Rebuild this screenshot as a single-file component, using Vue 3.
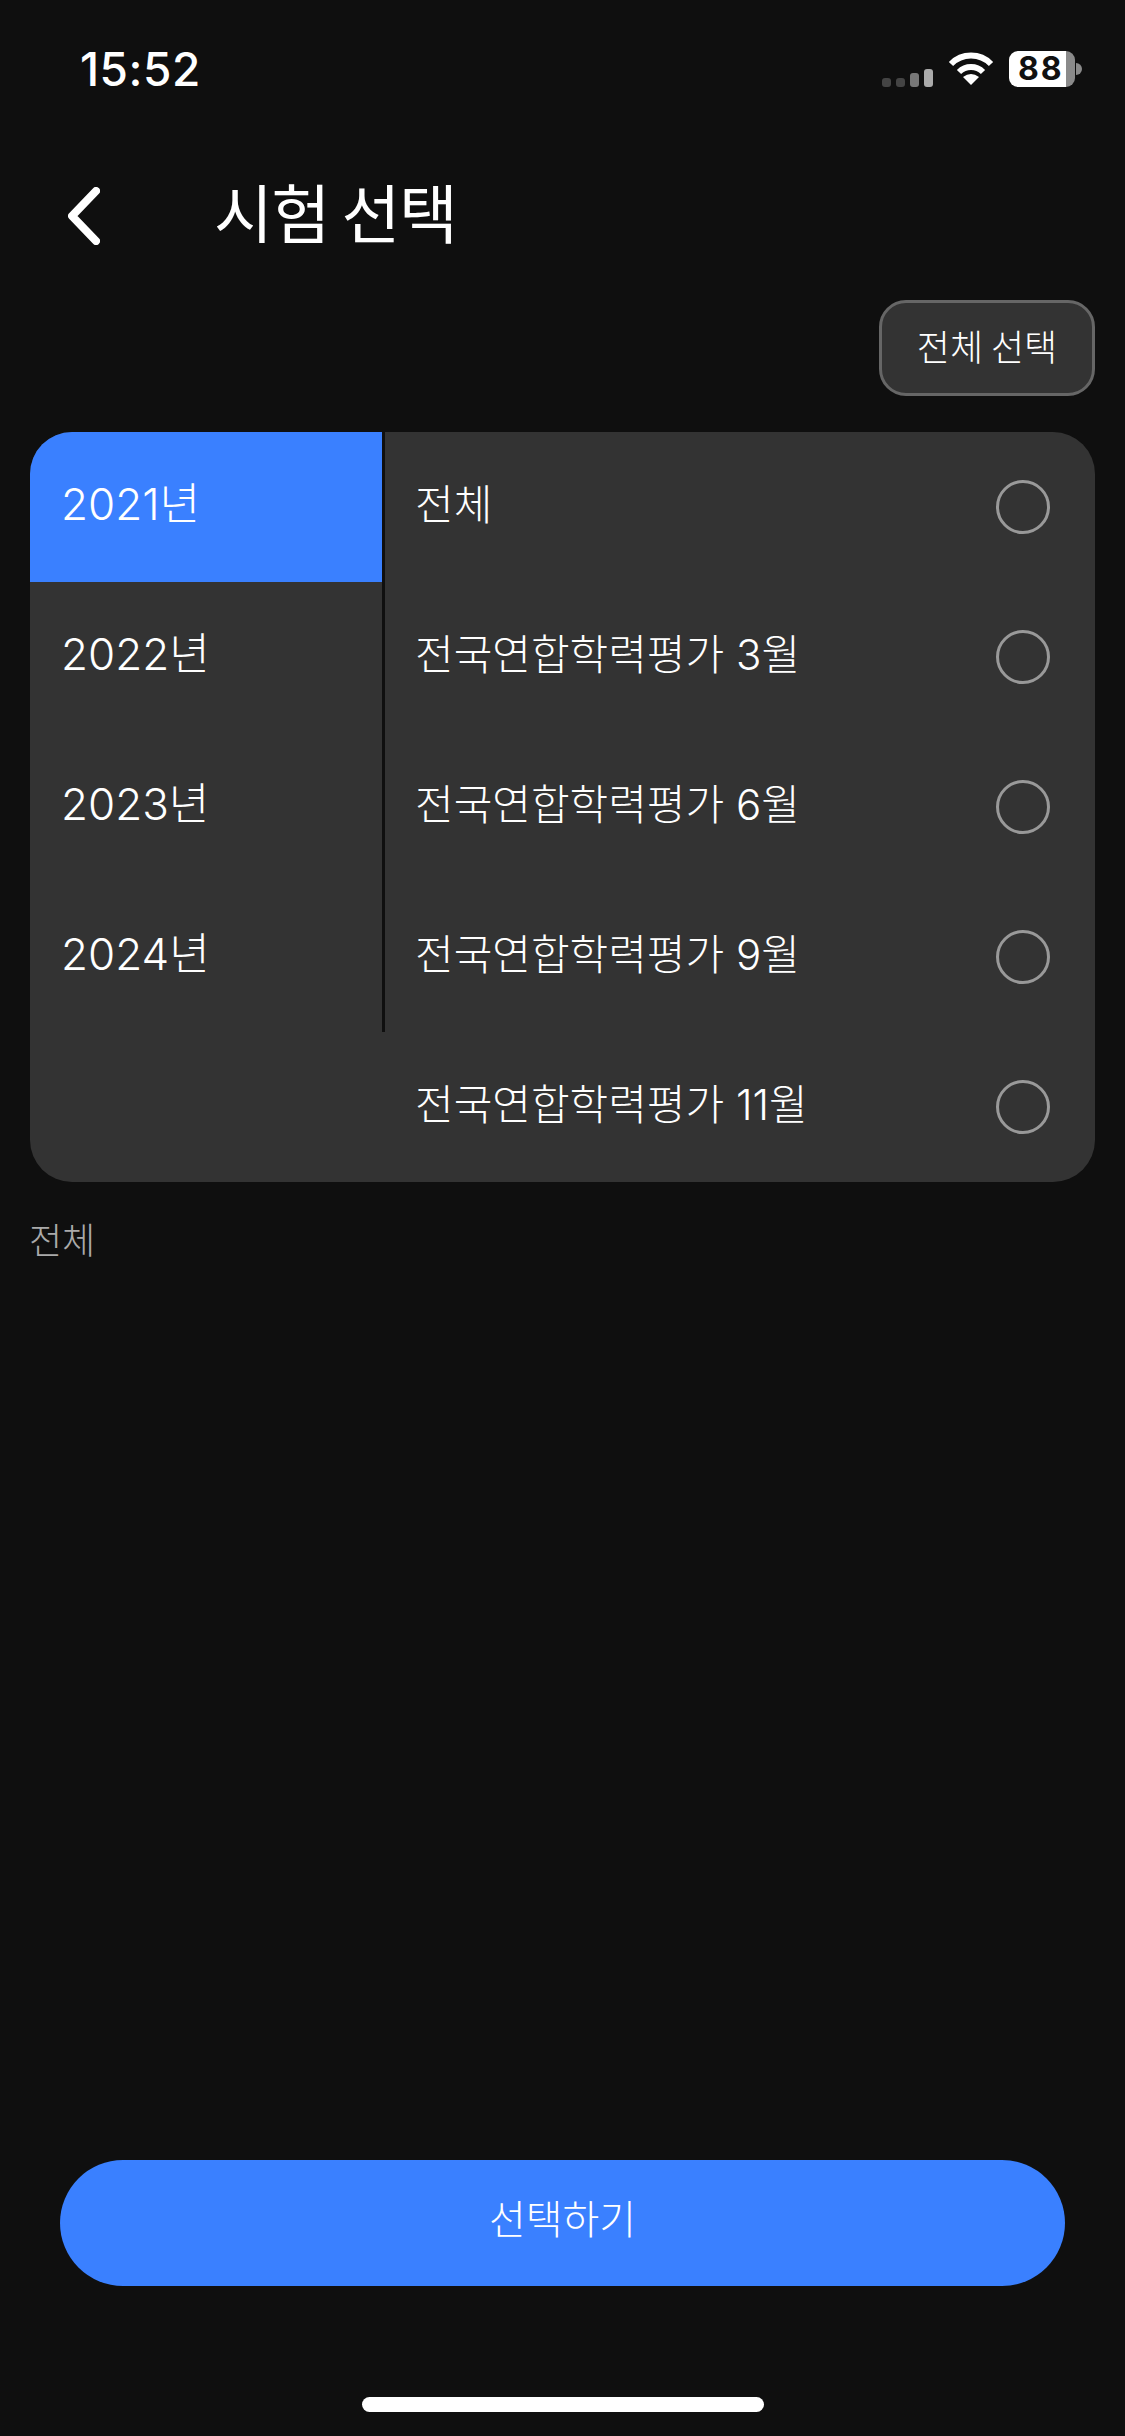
<script setup>
const years = [
  { label: '2021년', active: true },
  { label: '2022년', active: false },
  { label: '2023년', active: false },
  { label: '2024년', active: false },
]
const exams = ['전체', '전국연합학력평가 3월', '전국연합학력평가 6월', '전국연합학력평가 9월', '전국연합학력평가 11월']
</script>

<template>
  <div class="page">
    <div class="status">
      <span class="time">15:52</span>
      <div class="status-right">
        <div class="signal">
          <i class="b1"></i><i class="b2"></i><i class="b3"></i><i class="b4"></i>
        </div>
        <svg class="wifi" width="46" height="33" viewBox="0 0 46 33">
          <path d="M3 12A28 28 0 0 1 43 12" fill="none" stroke="#fff" stroke-width="6" />
          <path d="M11 20A17 17 0 0 1 35 20" fill="none" stroke="#fff" stroke-width="6" />
          <path d="M23 33L15 25Q23 19 31 25Z" fill="#fff" />
        </svg>
        <div class="battery"><span>88</span></div>
        <div class="nub"></div>
      </div>
    </div>

    <header class="header">
      <svg class="back" width="32" height="58" viewBox="0 0 32 58">
        <path d="M28 4L4 29L28 54" fill="none" stroke="#fff" stroke-width="8" stroke-linecap="round" stroke-linejoin="round" />
      </svg>
      <h1 class="title">시험 선택</h1>
    </header>

    <div class="actions">
      <button class="select-all">전체 선택</button>
    </div>

    <section class="card">
      <div class="years">
        <div v-for="y in years" :key="y.label" class="year" :class="{ active: y.active }">
          <span>{{ y.label }}</span>
        </div>
      </div>
      <div class="exams">
        <div v-for="e in exams" :key="e" class="exam">
          <span>{{ e }}</span>
          <span class="radio"></span>
        </div>
      </div>
    </section>

    <p class="selected">전체</p>

    <div class="spacer"></div>

    <button class="confirm">선택하기</button>
    <div class="home"></div>
  </div>
</template>

<style scoped>
.page {
  height: 2436px;
  width: 1125px;
  display: flex;
  flex-direction: column;
  background: #0f0f0f;
  color: #fff;
  font-family: Inter, "Noto Sans CJK KR", sans-serif;
  font-weight: 300;
  overflow: hidden;
}
.status {
  height: 120px;
  flex: none;
  display: flex;
  justify-content: space-between;
  align-items: flex-start;
  padding: 0 43px 0 80px;
  box-sizing: border-box;
}
.time {
  font-family: Inter, sans-serif;
  font-weight: 500;
  font-size: 46px;
  line-height: 54px;
  letter-spacing: 0.5px;
  margin-top: 42px;
}
.status-right {
  display: flex;
  align-items: flex-end;
  margin-top: 51px;
  height: 36px;
}
.signal {
  display: flex;
  align-items: flex-end;
  gap: 5px;
  height: 34px;
  margin-right: 15px;
}
.signal i {
  width: 9px;
  border-radius: 3px;
  display: block;
}
.b1, .b2 { height: 9px; background: #444; }
.b3 { height: 14px; background: #777; }
.b4 { height: 18px; background: #aaa; }
.wifi {
  margin-right: 15px;
  margin-bottom: 2px;
}
.battery {
  width: 66px;
  height: 36px;
  box-sizing: border-box;
  border-radius: 9px;
  background: linear-gradient(90deg, #fff 57px, #8a8a8a 57px);
  color: #111;
  font-family: Inter, sans-serif;
  font-weight: 700;
  font-size: 32px;
  line-height: 36px;
  letter-spacing: 2px;
  padding-left: 9px;
}
.nub {
  width: 6px;
  height: 12px;
  margin: 0 0 12px 1px;
  background: #8a8a8a;
  border-radius: 0 6px 6px 0;
}
.header {
  height: 180px;
  flex: none;
  display: flex;
  align-items: center;
  padding: 12px 0 0 68px;
  box-sizing: border-box;
}
.title {
  margin: 0 0 0 114px;
  font-family: "Noto Sans CJK KR", sans-serif;
  font-weight: 400;
  font-size: 64px;
  line-height: 80px;
  letter-spacing: -1.5px;
  position: relative;
  top: -6px;
}
.actions {
  flex: none;
  display: flex;
  justify-content: flex-end;
  padding-right: 30px;
  margin-bottom: 36px;
}
.select-all {
  width: 216px;
  height: 96px;
  box-sizing: border-box;
  background: #333;
  border: 3px solid #666;
  border-radius: 27px;
  color: #fff;
  font-family: "Noto Sans CJK KR", sans-serif;
  font-weight: 300;
  font-size: 36px;
  padding: 0 0 6px;
}
.card {
  flex: none;
  height: 750px;
  margin: 0 30px;
  background: #333;
  border-radius: 42px;
  overflow: hidden;
  display: flex;
  align-items: flex-start;
}
.years {
  width: 355px;
  height: 600px;
  flex: none;
  box-sizing: border-box;
  border-right: 3px solid #0f0f0f;
}
.year {
  height: 150px;
  display: flex;
  align-items: center;
  padding: 0 0 12px 31px;
  box-sizing: border-box;
  font-size: 44px;
}
.year.active { background: #3a80ff; }
.exams { flex: 1; }
.exam {
  height: 150px;
  display: flex;
  align-items: center;
  justify-content: space-between;
  padding-left: 30px;
  padding-right: 45px;
  box-sizing: border-box;
  font-size: 42px;
}
.exam > span:first-child { position: relative; top: -6px; }
.radio {
  width: 54px;
  height: 54px;
  box-sizing: border-box;
  border: 3px solid #999;
  border-radius: 50%;
}
.selected {
  margin: 29px 0 0 29px;
  font-family: "Noto Sans CJK KR", sans-serif;
  font-size: 36px;
  line-height: 54px;
  color: #aaa;
}
.spacer { flex: 1; }
.confirm {
  flex: none;
  height: 126px;
  margin: 0 60px;
  background: #3a80ff;
  border: none;
  border-radius: 63px;
  color: #fff;
  font-family: "Noto Sans CJK KR", sans-serif;
  font-weight: 300;
  font-size: 40px;
  padding: 0 0 12px;
}
.home {
  flex: none;
  width: 402px;
  height: 15px;
  margin: 111px auto 24px;
  background: #fff;
  border-radius: 8px;
}
</style>
